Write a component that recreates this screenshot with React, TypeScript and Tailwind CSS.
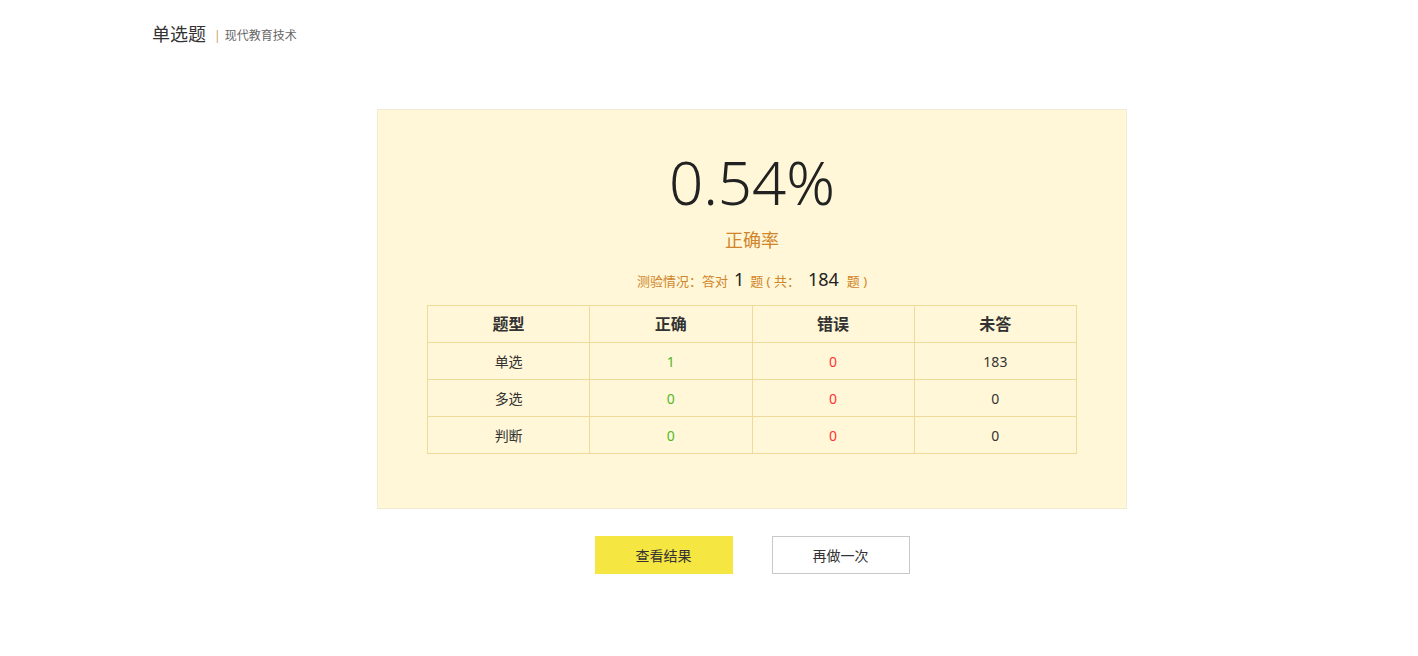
import React from 'react';

const rows = [
  { type: '单选', right: 1, wrong: 0, none: 183 },
  { type: '多选', right: 0, wrong: 0, none: 0 },
  { type: '判断', right: 0, wrong: 0, none: 0 },
];

export default function App() {
  return (
    <div
      className="min-h-[656px] w-full bg-white text-[#333]"
      style={{ fontFamily: '"Noto Sans", "Noto Sans CJK SC", sans-serif' }}
    >
      {/* header */}
      <div className="flex items-end pl-[152px] pt-[22px] h-[46px]">
        <span className="text-[18px] leading-[24px] text-[#333]">单选题</span>
        <span className="ml-[8px] text-[12px] leading-[20px] text-[#666]">
          <span className="text-[#c9a15a] mr-[4px]">|</span>现代教育技术
        </span>
      </div>

      <div className="ml-[377px] w-[750px]">
        {/* result card */}
        <div className="mt-[63px] h-[400px] bg-[#fff7d7] border border-[#f1ebd3] flex flex-col items-center">
          <div className="mt-[37px] text-[60px] leading-[70px] font-light text-[#222]">0.54%</div>
          <div className="mt-[11px] text-[18px] leading-[24px] text-[#d0852a]">正确率</div>
          <div className="mt-[15px] text-[13px] leading-[24px] text-[#d0852a] flex items-baseline">
            <span>测验情况：答对</span>
            <span className="mx-[6px] text-[18px] text-[#222]">1</span>
            <span>题 ( 共：</span>
            <span className="mx-[8px] text-[18px] text-[#222]">184</span>
            <span>题 )</span>
          </div>

          <table className="mt-[12px] w-[650px] border-collapse table-fixed">
            <thead>
              <tr className="h-[37px]">
                {['题型', '正确', '错误', '未答'].map((h) => (
                  <th key={h} className="border border-[#eedb9c] text-[16px] font-bold text-[#333]">
                    {h}
                  </th>
                ))}
              </tr>
            </thead>
            <tbody>
              {rows.map((r) => (
                <tr key={r.type} className="h-[37px] text-[14px] text-center">
                  <td className="border border-[#eedb9c] text-[#333]">{r.type}</td>
                  <td className="border border-[#eedb9c] text-[#52b82a]">{r.right}</td>
                  <td className="border border-[#eedb9c] text-[#ff3333]">{r.wrong}</td>
                  <td className="border border-[#eedb9c] text-[#333]">{r.none}</td>
                </tr>
              ))}
            </tbody>
          </table>
        </div>

        {/* buttons */}
        <div className="mt-[27px] flex justify-center gap-[39px]">
          <button className="w-[138px] h-[38px] bg-[#f5e642] text-[14px] text-[#333]">查看结果</button>
          <button className="w-[138px] h-[38px] bg-white border border-[#c8c8c8] text-[14px] text-[#333]">再做一次</button>
        </div>
      </div>
    </div>
  );
}
